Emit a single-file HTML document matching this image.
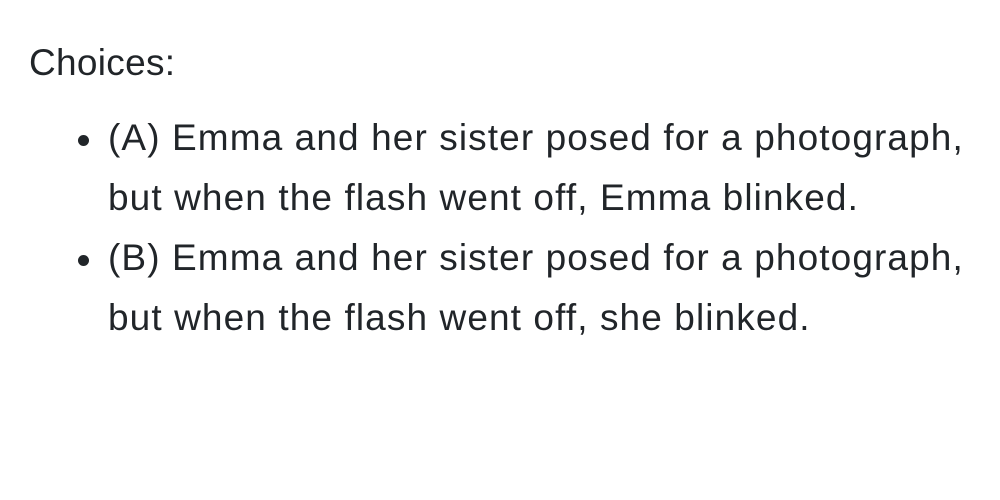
<!DOCTYPE html>
<html><head><style>
body{margin:0;background:#fff;color:#212529;font-family:"Liberation Sans",sans-serif;font-size:37px;line-height:60px;letter-spacing:1.1px}
.c{position:absolute;left:29px;top:33px;letter-spacing:0.3px}
ul{position:absolute;left:108px;top:108px;margin:0;padding:0;width:890px;list-style:none}
li{position:relative;white-space:nowrap}
li:before{content:"";position:absolute;left:-30px;top:27px;width:11px;height:11px;border-radius:50%;background:#212529}
</style></head><body>
<div class="c">Choices:</div>
<ul>
<li>(A) Emma and her sister posed for a photograph,<br>but when the flash went off, Emma blinked.</li>
<li>(B) Emma and her sister posed for a photograph,<br>but when the flash went off, she blinked.</li>
</ul>
</body></html>
